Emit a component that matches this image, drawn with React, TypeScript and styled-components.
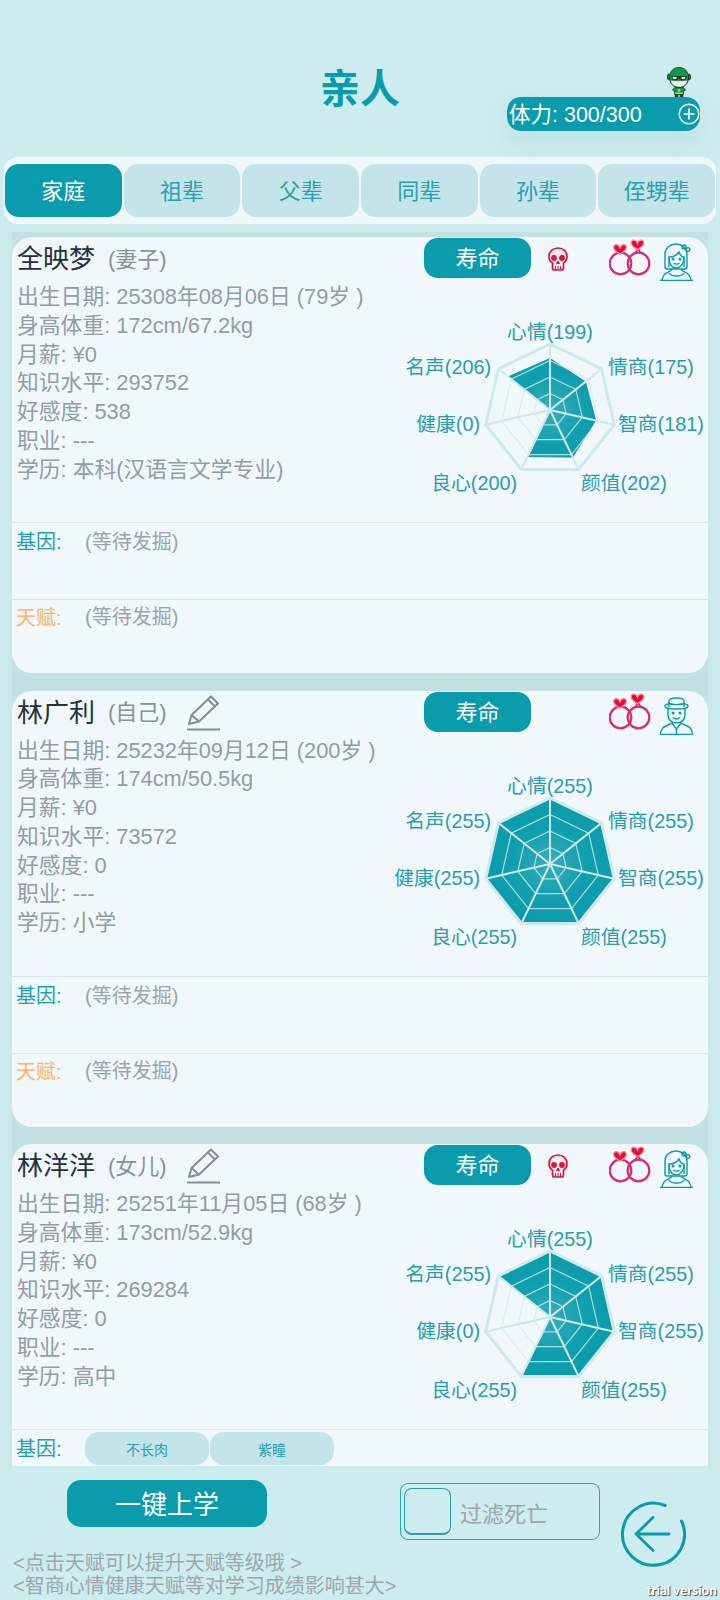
import React from "react";
import styled, { createGlobalStyle } from "styled-components";

const TEAL = "#0a9bac";
const FONT = `"Liberation Sans", "Noto Sans CJK SC", sans-serif`;

const Global = createGlobalStyle`
  html, body { margin: 0; padding: 0; background: #cdecef; }
  #root { width: 720px; height: 1600px; overflow: hidden; }
  * { box-sizing: border-box; }
`;

const Page = styled.div`
  position: relative;
  width: 720px;
  height: 1600px;
  background: #cdecef;
  font-family: ${FONT};
  overflow: hidden;
`;

const Header = styled.header`
  display: grid;
  grid-template-columns: 1fr auto 1fr;
  height: 157px;
`;

const Title = styled.h1`
  grid-column: 2;
  margin: 67px 0 0;
  font-size: 40px;
  line-height: 44px;
  font-weight: 700;
  color: ${TEAL};
`;

const Stamina = styled.div`
  grid-column: 3;
  justify-self: end;
  position: relative;
  display: flex;
  align-items: center;
  justify-content: space-between;
  width: 193px;
  height: 34px;
  margin: 97px 20px 0 0;
  padding: 0 1px 3px 2px;
  border-radius: 14px;
  background: ${TEAL};
  color: #fff;
  font-size: 21.5px;
  box-shadow: 0 10px 24px rgba(120, 170, 180, 0.18);
`;

const Sprite = styled.svg`
  position: absolute;
  left: 160px;
  top: -30px;
`;

const PlusBadge = styled.svg`
  position: absolute;
  right: 0;
  top: 6px;
`;

const Tabs = styled.nav`
  display: grid;
  grid-template-columns: repeat(6, 1fr);
  gap: 2px;
  margin: 0 4px;
  padding: 7px 1px;
  height: 67px;
  border-radius: 14px;
  background: #eef7fa;
`;

const Tab = styled.div<{ $active?: boolean }>`
  display: flex;
  align-items: center;
  justify-content: center;
  padding-bottom: 4px;
  border-radius: 14px;
  font-size: 22px;
  background: ${(p) => (p.$active ? TEAL : "#c3e5ea")};
  color: ${(p) => (p.$active ? "#fff" : "#2c9fae")};
`;

const Scroller = styled.main`
  display: flex;
  flex-direction: column;
  gap: 17.5px;
  height: 1234px;
  margin: 8px 8px 0;
  padding: 5px 4px 0;
  overflow: hidden;
  background: linear-gradient(
    to right,
    #c9e8ec 4px,
    #c3e0e4 4px,
    #c3e0e4 calc(100% - 4px),
    #c9e8ec calc(100% - 4px)
  );
`;

const Card = styled.section`
  flex: 0 0 436px;
  display: flex;
  flex-direction: column;
  border-radius: 20px;
  background: #f0f8fb;
`;

const Top = styled.div`
  display: flex;
  flex: 0 0 285px;
`;

const Info = styled.div`
  flex: 0 0 368px;
  padding-left: 5px;
`;

const NameRow = styled.div`
  display: flex;
  align-items: center;
  height: 39px;
  margin-bottom: 7px;
`;

const Name = styled.span`
  font-size: 26px;
  color: #27313d;
`;

const Relation = styled.span`
  margin-left: 13px;
  font-size: 22px;
  color: #87929b;
`;

const Pencil = styled.svg`
  margin-left: 20px;
  margin-top: 4px;
`;

const InfoLine = styled.div`
  font-size: 21.8px;
  line-height: 28.8px;
  color: #929da5;
  white-space: nowrap;
`;

const Side = styled.div`
  flex: 0 0 328px;
  display: flex;
  flex-direction: column;
`;

const Actions = styled.div`
  display: flex;
  align-items: flex-start;
  height: 44px;
`;

const LifeButton = styled.div`
  display: flex;
  align-items: center;
  justify-content: center;
  width: 107px;
  height: 40px;
  margin: 1px 17px 0 44px;
  padding-bottom: 4px;
  border-radius: 14px;
  background: ${TEAL};
  color: #fff;
  font-size: 22px;
`;

const SkullSlot = styled.div`
  width: 20px;
  height: 24px;
  margin: 10px 41px 0 0;
`;

const Rings = styled.svg`
  margin: 1px 9px 0 0;
`;

const Avatar = styled.svg`
  margin-top: 6px;
`;

const RadarSvg = styled.svg`
  display: block;
  overflow: visible;
`;

const Section = styled.div<{ $h: number }>`
  display: flex;
  align-items: flex-start;
  flex: 0 0 ${(p) => p.$h}px;
  margin: 0 -2px;
  padding-left: 6px;
  border-top: 1.5px solid #dce9ec;
`;

const SectionLabel = styled.span<{ $talent?: boolean }>`
  flex: 0 0 69px;
  font-size: 20px;
  line-height: ${(p) => (p.$talent ? 36 : 38)}px;
  color: ${(p) => (p.$talent ? "#fbb46a" : "#1f9fae")};
`;

const Placeholder = styled.span<{ $talent?: boolean }>`
  font-size: 20px;
  line-height: ${(p) => (p.$talent ? 35 : 38)}px;
  color: #9aa5ac;
`;

const Chips = styled.div`
  display: flex;
  gap: 1px;
  margin-top: 2px;
`;

const Chip = styled.span`
  display: flex;
  align-items: center;
  justify-content: center;
  width: 124px;
  height: 33px;
  border-radius: 14px;
  background: #c3e5ea;
  color: #2c9fae;
  font-size: 14px;
`;

const Bottom = styled.footer`
  display: flex;
  align-items: flex-start;
`;

const BottomLeft = styled.div`
  flex: 0 0 400px;
  padding-left: 13px;
`;

const BatchButton = styled.div`
  display: flex;
  align-items: center;
  justify-content: center;
  width: 200px;
  height: 47px;
  margin: 14px 0 25px 54px;
  padding-bottom: 2px;
  border-radius: 14px;
  background: ${TEAL};
  color: #fff;
  font-size: 26px;
`;

const Hint = styled.div`
  font-size: 20px;
  line-height: 22.5px;
  color: #9aa8ae;
  white-space: nowrap;
`;

const Filter = styled.div`
  display: flex;
  align-items: center;
  flex: 0 0 200px;
  height: 57px;
  margin-top: 17px;
  padding-left: 3px;
  border: 1.5px solid #2aa3b3;
  border-radius: 8px;
  color: #9aa5ac;
  font-size: 22px;
`;

const FilterBox = styled.div`
  width: 47px;
  height: 47px;
  margin-right: 9px;
  border: 1.5px solid #2a9dad;
  border-bottom-width: 2px;
  border-radius: 8px;
`;

const Back = styled.svg`
  margin: 35px 0 0 20px;
`;

const Watermark = styled.div`
  position: absolute;
  right: 3px;
  bottom: 2px;
  font-family: "Lato", sans-serif;
  font-size: 13.5px;
  font-weight: 700;
  color: #fff;
  text-shadow: 1px 1px 1px #444;
`;

/* ---------- drawings ---------- */

const SpriteIcon = () => (
  <Sprite width="24" height="30" viewBox="0 0 24 30">
    <ellipse cx="1.800" cy="10" rx="1.500" ry="3" fill="#0e7f3e" stroke="#111" strokeWidth=".6" />
    <ellipse cx="22.200" cy="10" rx="1.500" ry="3" fill="#0e7f3e" stroke="#111" strokeWidth=".6" />
    <path d="M12 .5C6.500.5 2.500 4.500 2.500 10.500c0 6 4 10 9.500 10s9.500-4 9.500-10C21.500 4.500 17.500.5 12 .5z" fill="#0f9a4a" stroke="#12301f" strokeWidth=".8" />
    <path d="M3.500 13c2 1 15 1 17 0-.5 4.500-4 7-8.500 7s-8-2.500-8.500-7z" fill="#f3f3ea" stroke="#12301f" strokeWidth=".4" />
    <path d="M4 9h16l-2 4.200h-3.600L12 11.600l-2.400 1.600H6z" fill="#163d28" />
    <path d="M5.500 10h4.500l-1.200 2H6.500zM14 10h4.500l-1 2h-2.300z" fill="#f2f5ee" />
    <path d="M7.500 20.500h9l2 2.500-1.800 1-.4 3.500H7.700l-.4-3.500-1.800-1z" fill="#10924a" stroke="#12301f" strokeWidth=".7" />
    <circle cx="12" cy="23.300" r="1.400" fill="#8fe0a0" />
    <rect x="8" y="25.600" width="8" height="1.300" fill="#e8d230" />
    <path d="M8 27.500h3V30H8zM13 27.500h3V30h-3z" fill="#0c6f38" stroke="#111" strokeWidth=".5" />
  </Sprite>
);

const PlusIcon = () => (
  <PlusBadge width="22" height="22" viewBox="0 0 22 22" fill="none" stroke="#fff">
    <circle cx="11" cy="11" r="9.800" strokeWidth="1.400" />
    <path d="M11 5.500v11M5.500 11h11" strokeWidth="1.700" />
  </PlusBadge>
);

const SkullIcon = () => (
  <svg width="20" height="24" viewBox="0 0 20 24">
    <path
      d="M10 1C4.800 1 1 4.600 1 9.500c0 3 1.300 5.300 3.500 6.700V21c0 1 .8 2 2 2h7c1.200 0 2-1 2-2v-4.800C17.700 14.800 19 12.500 19 9.500 19 4.600 15.200 1 10 1z"
      fill="#f7e9ec"
      stroke="#d4193c"
      strokeWidth="1.700"
    />
    <circle cx="6" cy="11" r="2.900" fill="#d4193c" />
    <circle cx="14" cy="11" r="2.900" fill="#d4193c" />
    <path d="M10 14l-1.500 2.500h3zM7.500 19v4M10 19v4M12.500 19v4" fill="#d4193c" stroke="#d4193c" strokeWidth="1" />
  </svg>
);

const Heart = ({ x, y }: { x: number; y: number }) => (
  <path
    transform={`translate(${x} ${y}) scale(.78)`}
    d="M0 5C-2-1-9 0-8 5c.5 3.500 5 6 8 8 3-2 7.500-4.500 8-8C9 0 2-1 0 5z"
    fill="#e2102e"
    stroke="#f08aa8"
    strokeWidth="1.600"
  />
);

const RingsIcon = () => (
  <Rings width="42" height="38" viewBox="0 0 42 38" fill="none">
    <circle cx="11.500" cy="25.500" r="10.800" stroke="#d42c78" strokeWidth="2.200" />
    <circle cx="29.500" cy="25.500" r="10.800" stroke="#d42c78" strokeWidth="2.200" />
    <path d="M8 15.500l3-3.500 3 3.500M26 15.500l3-5 3 5" stroke="#d42c78" strokeWidth="1.800" />
    <Heart x={11} y={6} />
    <Heart x={28.500} y={1.500} />
  </Rings>
);

const WomanIcon = () => (
  <Avatar width="33" height="38" viewBox="0 0 33 38" fill="none" stroke={TEAL} strokeWidth="1.400">
    <path d="M5 24V11C5 5 10 1 16 1s11 4 11 10v13c0 1-1 2-2 2H7c-1 0-2-1-2-2z" />
    <path d="M9 24V14c4 0 8-2 10-5 1 3 3 5 5 5v10" />
    <path d="M9 15c0 6 3 10 7 10s8-4 8-10" />
    <circle cx="13" cy="16" r=".800" fill={TEAL} />
    <circle cx="20" cy="16" r=".800" fill={TEAL} />
    <path d="M13.500 20c1.500 1.500 4.500 1.500 6 0" />
    <path d="M12 26c-1 3-6 3-8 6-1 2-2 4-2 5M21 26c1 3 6 3 8 6 1 2 2 4 2 5" />
    <path d="M9 30c2 4 13 4 15 0" />
    <path d="M0 37.500h33" strokeWidth="1.600" />
    <circle cx="24" cy="4" r="2" />
    <circle cx="28" cy="6.500" r="1.800" />
  </Avatar>
);

const ManIcon = () => (
  <Avatar width="33" height="38" viewBox="0 0 33 38" fill="none" stroke={TEAL} strokeWidth="1.400">
    <path d="M9 10V4c0-2 2-3 7.500-3S24 2 24 4v6" />
    <path d="M5 9c0 2 2 3 11.500 3S28 11 28 9c0-1-1-1.500-4-2.500-3 1.500-12 1.500-15 0C6 7.500 5 8 5 9z" />
    <path d="M8 12v6c0 5 4 8 8.500 8S25 23 25 18v-6" />
    <circle cx="13" cy="16" r=".800" fill={TEAL} />
    <circle cx="20" cy="16" r=".800" fill={TEAL} />
    <path d="M13 20.500c2 2 5 2 7 0" />
    <path d="M12 26l-8 4c-2 1-3 4-4 7M21 26l8 4c2 1 3 4 4 7" />
    <path d="M12 26l4.500 6 4.500-6M16.500 32v5" />
    <path d="M0 37.500h33" strokeWidth="1.600" />
  </Avatar>
);

const PencilIcon = () => (
  <Pencil width="33" height="37" viewBox="0 0 33 37" fill="none" stroke="#858d96" strokeWidth="2">
    <path d="M2 30l2.500-9L24 2.500l7 7L12 27.500z" strokeLinejoin="round" />
    <path d="M4.500 21l7.500 6.500M21 5.500l7 7" />
    <path d="M0 35.500h33" />
  </Pencil>
);

const BackIcon = () => (
  <Back width="66" height="66" viewBox="0 0 66 66" fill="none" stroke={TEAL} strokeWidth="3" strokeLinecap="round">
    <path d="M61.500 20A31 31 0 1 1 45 4.500" />
    <path d="M49 33H16M33 16.500L16 33l17 16.500" strokeWidth="2.800" />
  </Back>
);

const CX = 170;
const CY = 129;
const R = 66;
const MAX = 255;

const point = (i: number, r: number) => {
  const a = (i * 2 * Math.PI) / 7;
  return [CX + r * Math.sin(a), CY - r * Math.cos(a)];
};

const poly = (rs: number[]) => rs.map((r, i) => point(i, r).map((n) => n.toFixed(1)).join(",")).join(" ");

const LABELS: { name: string; x: number; y: number; anchor: "start" | "middle" | "end" }[] = [
  { name: "心情", x: 170, y: 58, anchor: "middle" },
  { name: "情商", x: 228, y: 93, anchor: "start" },
  { name: "智商", x: 238, y: 150, anchor: "start" },
  { name: "颜值", x: 201, y: 209, anchor: "start" },
  { name: "良心", x: 137, y: 209, anchor: "end" },
  { name: "健康", x: 100, y: 150, anchor: "end" },
  { name: "名声", x: 111, y: 93, anchor: "end" },
];

const Radar = ({ id, values }: { id: string; values: number[] }) => (
  <RadarSvg width="328" height="230" viewBox="0 0 328 230">
    <defs>
      <radialGradient id={id} gradientUnits="userSpaceOnUse" cx={CX} cy={CY} r={R}>
        <stop offset="0" stopColor="#3aadb9" />
        <stop offset=".55" stopColor="#0f9fae" />
        <stop offset="1" stopColor={TEAL} />
      </radialGradient>
    </defs>
    <polygon points={poly(values.map((v) => (v / MAX) * R))} fill={`url(#${id})`} stroke={TEAL} strokeWidth="1" />
    {[0.25, 0.5, 0.75].map((k) => (
      <polygon key={k} points={poly(values.map(() => R * k))} fill="none" stroke="#d3ebee" strokeOpacity=".8" strokeWidth="1.200" />
    ))}
    <polygon points={poly(values.map(() => R))} fill="none" stroke="#cfe9ec" strokeWidth="3" strokeLinejoin="round" />
    {values.map((_, i) => {
      const [x, y] = point(i, R);
      return <line key={i} x1={CX} y1={CY} x2={x} y2={y} stroke="#cfe9ec" strokeWidth="2" />;
    })}
    {LABELS.map((l, i) => (
      <text key={l.name} x={l.x} y={l.y} textAnchor={l.anchor} fontSize="19.8" fill="#2a9dad" fontFamily={FONT}>
        {l.name}({values[i]})
      </text>
    ))}
  </RadarSvg>
);

/* ---------- data ---------- */

type Person = {
  id: string;
  name: string;
  relation: string;
  editable: boolean;
  dead: boolean;
  woman: boolean;
  lines: string[];
  values: number[];
  genes: string[];
  talentInView: boolean;
};

const people: Person[] = [
  {
    id: "a",
    name: "全映梦",
    relation: "(妻子)",
    editable: false,
    dead: true,
    woman: true,
    lines: ["出生日期: 25308年08月06日 (79岁 )", "身高体重: 172cm/67.2kg", "月薪: ¥0", "知识水平: 293752", "好感度: 538", "职业: ---", "学历: 本科(汉语言文学专业)"],
    values: [199, 175, 181, 202, 200, 0, 206],
    genes: [],
    talentInView: true,
  },
  {
    id: "b",
    name: "林广利",
    relation: "(自己)",
    editable: true,
    dead: false,
    woman: false,
    lines: ["出生日期: 25232年09月12日 (200岁 )", "身高体重: 174cm/50.5kg", "月薪: ¥0", "知识水平: 73572", "好感度: 0", "职业: ---", "学历: 小学"],
    values: [255, 255, 255, 255, 255, 255, 255],
    genes: [],
    talentInView: true,
  },
  {
    id: "c",
    name: "林洋洋",
    relation: "(女儿)",
    editable: true,
    dead: true,
    woman: true,
    lines: ["出生日期: 25251年11月05日 (68岁 )", "身高体重: 173cm/52.9kg", "月薪: ¥0", "知识水平: 269284", "好感度: 0", "职业: ---", "学历: 高中"],
    values: [255, 255, 255, 255, 255, 0, 255],
    genes: ["不长肉", "紫瞳"],
    talentInView: false,
  },
];

const tabs = ["家庭", "祖辈", "父辈", "同辈", "孙辈", "侄甥辈"];

export default function App() {
  return (
    <Page>
      <Global />
      <Header>
        <Title>亲人</Title>
        <Stamina>
          <SpriteIcon />
          <span>体力: 300/300</span>
          <PlusIcon />
        </Stamina>
      </Header>
      <Tabs>
        {tabs.map((t, i) => (
          <Tab key={t} $active={i === 0}>
            {t}
          </Tab>
        ))}
      </Tabs>
      <Scroller>
        {people.map((p) => (
          <Card key={p.id}>
            <Top>
              <Info>
                <NameRow>
                  <Name>{p.name}</Name>
                  <Relation>{p.relation}</Relation>
                  {p.editable && <PencilIcon />}
                </NameRow>
                {p.lines.map((l) => (
                  <InfoLine key={l}>{l}</InfoLine>
                ))}
              </Info>
              <Side>
                <Actions>
                  <LifeButton>寿命</LifeButton>
                  <SkullSlot>{p.dead && <SkullIcon />}</SkullSlot>
                  <RingsIcon />
                  {p.woman ? <WomanIcon /> : <ManIcon />}
                </Actions>
                <Radar id={`grad-${p.id}`} values={p.values} />
              </Side>
            </Top>
            <Section $h={77}>
              <SectionLabel>基因:</SectionLabel>
              {p.genes.length ? (
                <Chips>
                  {p.genes.map((g) => (
                    <Chip key={g}>{g}</Chip>
                  ))}
                </Chips>
              ) : (
                <Placeholder>(等待发掘)</Placeholder>
              )}
            </Section>
            {p.talentInView && (
              <Section $h={74}>
                <SectionLabel $talent>天赋:</SectionLabel>
                <Placeholder $talent>(等待发掘)</Placeholder>
              </Section>
            )}
          </Card>
        ))}
      </Scroller>
      <Bottom>
        <BottomLeft>
          <BatchButton>一键上学</BatchButton>
          <Hint>{"<点击天赋可以提升天赋等级哦 >"}</Hint>
          <Hint>{"<智商心情健康天赋等对学习成绩影响甚大>"}</Hint>
        </BottomLeft>
        <Filter>
          <FilterBox />
          过滤死亡
        </Filter>
        <BackIcon />
      </Bottom>
      <Watermark>trial version</Watermark>
    </Page>
  );
}
